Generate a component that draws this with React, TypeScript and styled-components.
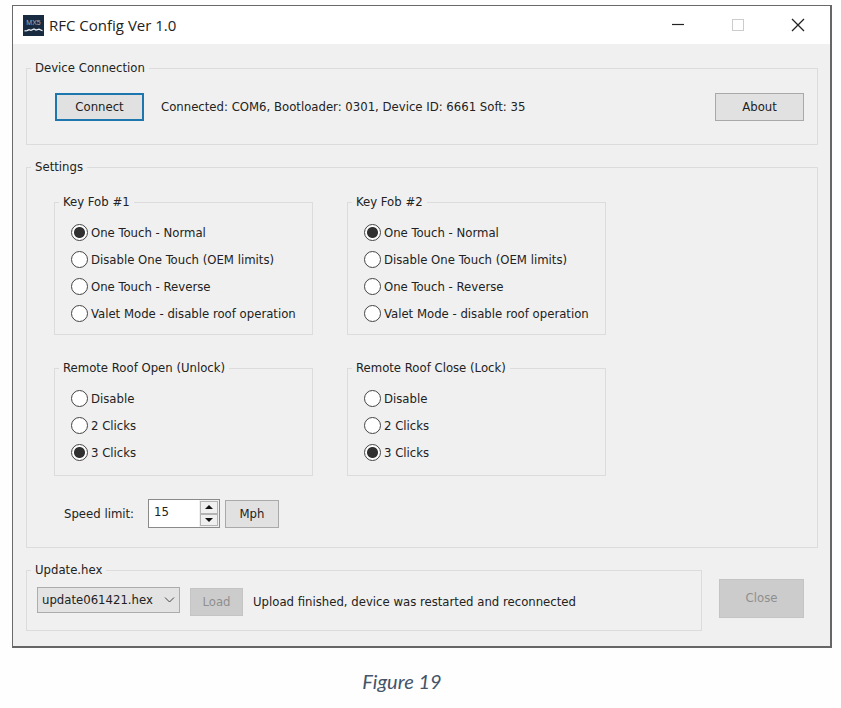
import React, { useId, useState } from "react";
import styled, { createGlobalStyle } from "styled-components";

const GlobalStyle = createGlobalStyle`
  *, *::before, *::after { box-sizing: border-box; }
  body {
    margin: 0;
    background: #fefefe;
    color: #222;
    font: 13px/18px "DejaVu Sans Condensed", "Noto Sans", sans-serif;
  }
  button, input, select { font: inherit; color: inherit; margin: 0; }
`;

const Figure = styled.figure`
  margin: 0;
  padding: 5px 9px 0 12px;
`;

const Caption = styled.figcaption`
  padding: 21px 40px 0 0;
  text-align: center;
  font: italic 20px/24px Lato, sans-serif;
  color: #44546a;
`;

const Window = styled.main`
  border: 1px solid #6a6a6a;
  border-right: 2px solid #666;
  border-bottom: 2px solid #666;
  background: #f0f0f0;
`;

const TitleBar = styled.header`
  display: flex;
  align-items: center;
  height: 38px;
  padding: 0 2px 0 10px;
  background: #fff;
`;

const Title = styled.h1`
  flex: 1;
  margin: 0 0 0 5px;
  font: 400 15px/24px "Open Sans", sans-serif;
  color: #222;
`;

const WindowButton = styled.button`
  display: grid;
  place-items: center;
  width: 60px;
  height: 38px;
  padding: 0;
  border: 0;
  background: none;
`;

const Content = styled.div`
  display: flex;
  flex-direction: column;
  gap: 13px;
  padding: 15px 12px 15px 13px;
`;

const Group = styled.fieldset<{ $pad: string }>`
  min-width: 0;
  margin: 0;
  padding: ${(p) => p.$pad};
  border: 1px solid #dcdcdc;
`;

const Legend = styled.legend<{ $indent?: number }>`
  margin-left: ${(p) => p.$indent ?? 0}px;
  padding: 0 4px;
  line-height: 18px;
`;

const Row = styled.div<{ $gap: number }>`
  display: flex;
  align-items: center;
  gap: ${(p) => p.$gap}px;
`;

const Status = styled.output`
  flex: 1;
`;

const Button = styled.button<{ $w: number; $h?: number; $focus?: boolean }>`
  width: ${(p) => p.$w}px;
  height: ${(p) => p.$h ?? 28}px;
  padding: 0;
  border: ${(p) => (p.$focus ? "2px solid #1d77ae" : "1px solid #a9a9a9")};
  background: #e1e1e1;
  &:disabled {
    border-color: #c4c4c4;
    background: #cccccc;
    color: #8f8f8f;
  }
`;

const GroupGrid = styled.div`
  display: grid;
  grid-template-columns: repeat(2, minmax(0, 259px));
  gap: 24px 34px;
`;

const Option = styled.label`
  display: flex;
  align-items: center;
  gap: 3px;
  height: 27px;
  white-space: nowrap;
`;

const Radio = styled.input`
  appearance: none;
  flex: none;
  width: 17px;
  height: 17px;
  border: 1px solid #444;
  border-radius: 50%;
  background: #fff;
  &:checked {
    background: radial-gradient(circle, #303030 5px, #fff 6px);
  }
`;

const SpeedRow = styled.div`
  display: flex;
  align-items: center;
  margin: 23px 0 0 10px;
`;

const SpeedLabel = styled.label`
  width: 84px;
`;

const Spinner = styled.div`
  display: flex;
  width: 72px;
  height: 29px;
  margin-right: 5px;
  border: 1px solid #8a8a8a;
  background: #f0f0f0;
`;

const SpinInput = styled.input`
  flex: 1;
  min-width: 0;
  padding: 0 5px 4px;
  border: 0;
  background: #fff;
`;

const SpinButtons = styled.div`
  display: grid;
  grid-template-rows: 1fr 1fr;
  width: 20px;
  padding: 1px;
`;

const SpinButton = styled.button`
  display: grid;
  place-items: center;
  padding: 0;
  border: 1px solid #b4b4b4;
  background: #f0f0f0;
`;

const Footer = styled.div`
  display: flex;
  align-items: center;
  gap: 17px;
  padding-right: 14px;
`;

const UpdateGroup = styled(Group)`
  flex: 1;
`;

const CloseButton = styled(Button)`
  margin-top: 4px;
`;

const SelectWrap = styled.div`
  display: grid;
  align-items: center;
  width: 143px;
  height: 26px;
  margin-bottom: 4px;
  svg { grid-area: 1 / 1; justify-self: end; margin-right: 5px; pointer-events: none; }
`;

const Select = styled.select`
  grid-area: 1 / 1;
  appearance: none;
  width: 100%;
  height: 26px;
  padding: 0 20px 0 4px;
  border: 1px solid #acacac;
  border-radius: 0;
  background: #e3e3e3;
`;

function AppIcon() {
  return (
    <svg width="21" height="21" viewBox="0 0 21 21" aria-hidden="true">
      <rect width="21" height="21" fill="#182b41" />
      <text x="10.5" y="10" textAnchor="middle" fontFamily="Liberation Sans" fontSize="7" fill="#a3b1c0">MX5</text>
      <path d="M1.5 15.8 L4 15.6 6 14.6 8 15.3 11 14 13 15 16 14.2 19.5 15.8" fill="none" stroke="#f2f6fa" strokeWidth="1.2" />
    </svg>
  );
}

function RadioGroup({ title, options, initial }: { title: string; options: string[]; initial: number }) {
  const name = useId();
  const [value, setValue] = useState(initial);
  return (
    <Group $pad={options.length > 3 ? "8px 11px 7px 16px" : "8px 11px 9px 16px"}>
      <Legend $indent={-12}>{title}</Legend>
      {options.map((text, i) => (
        <Option key={text}>
          <Radio type="radio" name={name} checked={value === i} onChange={() => setValue(i)} />
          {text}
        </Option>
      ))}
    </Group>
  );
}

const touchModes = [
  "One Touch - Normal",
  "Disable One Touch (OEM limits)",
  "One Touch - Reverse",
  "Valet Mode - disable roof operation",
];
const clickModes = ["Disable", "2 Clicks", "3 Clicks"];

export default function App() {
  const [speed, setSpeed] = useState(15);
  return (
    <>
      <GlobalStyle />
      <Figure>
        <Window>
          <TitleBar>
            <AppIcon />
            <Title>RFC Config Ver 1.0</Title>
            <WindowButton aria-label="Minimize">
              <svg width="14" height="14"><path d="M1 6.5h12" stroke="#222" strokeWidth="1.2" /></svg>
            </WindowButton>
            <WindowButton aria-label="Maximize" disabled>
              <svg width="14" height="14"><rect x="1.5" y="1.5" width="11" height="11" fill="none" stroke="#ccc" /></svg>
            </WindowButton>
            <WindowButton aria-label="Close window">
              <svg width="14" height="14"><path d="M1 1l12 12M13 1L1 13" stroke="#222" strokeWidth="1.3" /></svg>
            </WindowButton>
          </TitleBar>
          <Content>
            <Group $pad="16px 13px 23px 28px">
              <Legend $indent={-24}>Device Connection</Legend>
              <Row $gap={17}>
                <Button $w={89} $focus>Connect</Button>
                <Status>Connected: COM6, Bootloader: 0301, Device ID: 6661 Soft: 35</Status>
                <Button $w={89}>About</Button>
              </Row>
            </Group>
            <Group $pad="17px 13px 19px 27px">
              <Legend $indent={-23}>Settings</Legend>
              <GroupGrid>
                <RadioGroup title="Key Fob #1" options={touchModes} initial={0} />
                <RadioGroup title="Key Fob #2" options={touchModes} initial={0} />
                <RadioGroup title="Remote Roof Open (Unlock)" options={clickModes} initial={2} />
                <RadioGroup title="Remote Roof Close (Lock)" options={clickModes} initial={2} />
              </GroupGrid>
              <SpeedRow>
                <SpeedLabel htmlFor="speed">Speed limit:</SpeedLabel>
                <Spinner>
                  <SpinInput
                    id="speed"
                    inputMode="numeric"
                    value={speed}
                    onChange={(e) => setSpeed(Number(e.target.value) || 0)}
                  />
                  <SpinButtons>
                    <SpinButton aria-label="Increase" onClick={() => setSpeed(speed + 1)}>
                      <svg width="8" height="4"><path d="M4 0L8 4H0z" fill="#111" /></svg>
                    </SpinButton>
                    <SpinButton aria-label="Decrease" onClick={() => setSpeed(speed - 1)}>
                      <svg width="8" height="4"><path d="M0 0h8L4 4z" fill="#111" /></svg>
                    </SpinButton>
                  </SpinButtons>
                </Spinner>
                <Button $w={54}>Mph</Button>
              </SpeedRow>
            </Group>
            <Footer>
              <UpdateGroup $pad="8px 10px 13px 10px">
                <Legend $indent={-6}>Update.hex</Legend>
                <Row $gap={10}>
                  <SelectWrap>
                    <Select aria-label="Update file">
                      <option>update061421.hex</option>
                    </Select>
                    <svg width="11" height="6"><path d="M1 0.5l4.5 4.5L10 0.5" fill="none" stroke="#444" /></svg>
                  </SelectWrap>
                  <Button $w={53} disabled>Load</Button>
                  <Status>Upload finished, device was restarted and reconnected</Status>
                </Row>
              </UpdateGroup>
              <CloseButton $w={85} $h={39} disabled>Close</CloseButton>
            </Footer>
          </Content>
        </Window>
        <Caption>Figure 19</Caption>
      </Figure>
    </>
  );
}
